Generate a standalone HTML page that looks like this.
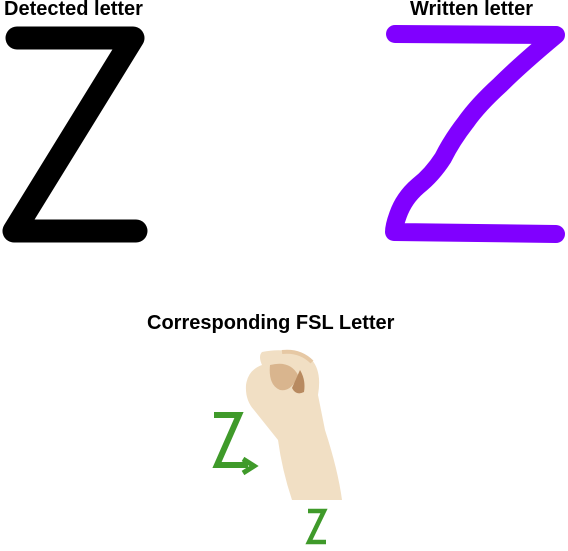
<!DOCTYPE html>
<html><head><style>
body{margin:0;width:568px;height:551px;background:#fff;overflow:hidden;position:relative;font-family:"Liberation Sans",Arial,sans-serif}
.t{position:absolute;font-weight:bold;font-size:20px;line-height:22px;color:#000;white-space:nowrap}
</style></head><body>
<div class="t" style="left:4px;top:-2px">Detected letter</div>
<div class="t" style="left:410px;top:-2px">Written letter</div>
<div class="t" style="left:147px;top:312px">Corresponding FSL Letter</div>
<svg width="568" height="551" style="position:absolute;left:0;top:0">
<path d="M17,38 L133,38 L14,231 L136,231" fill="none" stroke="#000" stroke-width="23" stroke-linejoin="round" stroke-linecap="round"/>
<path d="M395,34 L556,35 Q520,65 500,85 Q478,105 466,122 Q452,140 443,158 Q432,175 418,186 Q404,198 398,215 Q394,226 394,232 L556,234" fill="none" stroke="#8000ff" stroke-width="18" stroke-linejoin="round" stroke-linecap="round"/>
<!-- hand -->
<path d="M262,352 Q290,346 312,360 Q322,372 318,395 L325,430 Q338,470 342,500 L292,500 Q282,470 278,440 Q262,420 254,410 Q245,400 246,385 Q248,370 262,365 Q258,356 262,352Z" fill="#f1dfc4"/>
<path d="M270,365 Q290,360 298,375 Q292,392 280,390 Q268,385 270,365Z" fill="#d9b58e"/>
<path d="M300,370 Q306,380 304,392 Q296,396 292,388Z" fill="#b88a60"/>
<path d="M282,352 Q300,350 312,362" fill="none" stroke="#e6c8a4" stroke-width="4"/>
<!-- green Z's -->
<path d="M214,415 L239,415 L217,465 L248,465" fill="none" stroke="#3f9a2a" stroke-width="6" stroke-linejoin="miter"/>
<path d="M243,459 L254,466 L243,473" fill="none" stroke="#3f9a2a" stroke-width="5"/>
<path d="M308,511 L324,511 L309,542 L326,542" fill="none" stroke="#3f9a2a" stroke-width="4.5"/>
</svg>
</body></html>
